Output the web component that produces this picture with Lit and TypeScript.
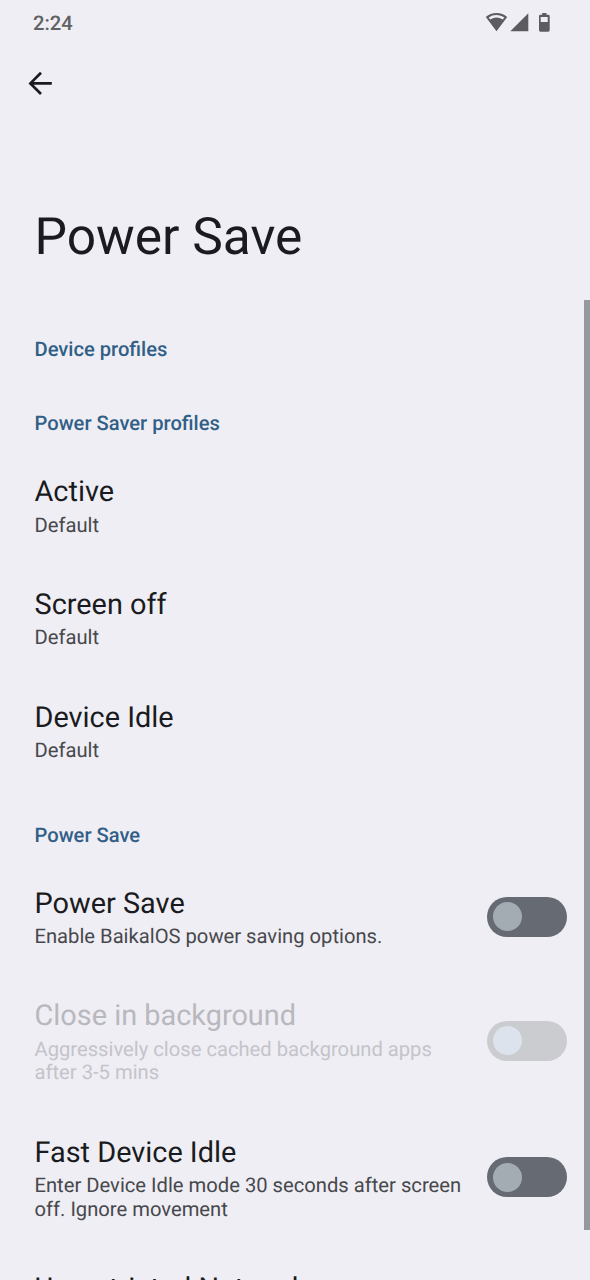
import { LitElement, html, css, nothing } from "lit";
import { customElement, property } from "lit/decorators.js";

@customElement("toggle-switch")
class ToggleSwitch extends LitElement {
  @property({ type: Boolean }) dimmed = false;
  static styles = css`
    :host { display: block; flex: none; }
    .track { box-sizing: border-box; width: 80px; height: 40px; border-radius: 20px; background: #666a72; padding: 5.5px; }
    .thumb { width: 29px; height: 29px; border-radius: 50%; background: #a3abb3; }
    .track.dimmed { background: #cbccd0; }
    .dimmed .thumb { background: #dde3ed; }
  `;
  render() {
    return html`<div class="track ${this.dimmed ? "dimmed" : ""}"><div class="thumb"></div></div>`;
  }
}

@customElement("pref-row")
class PrefRow extends LitElement {
  @property() label = "";
  @property() summary = "";
  @property({ type: Boolean }) toggle = false;
  @property({ type: Boolean }) dimmed = false;
  static styles = css`
    :host { display: block; }
    .row { display: flex; align-items: center; padding: 0 23px 0 34.5px; }
    .text { flex: 1; padding: 26.6px 20px 23.9px 0; }
    .label { font-size: 28.88px; line-height: 34px; color: #1a1b20; white-space: nowrap; }
    .summary { margin-top: 4.4px; margin-bottom: 0.3px; font-size: 20.2px; line-height: 23.5px; color: #47484c; }
    .dimmed .label { color: #b8b8bd; }
    .dimmed .summary { color: #c4c4ca; }
  `;
  render() {
    return html`<div class="row ${this.dimmed ? "dimmed" : ""}">
      <div class="text">
        <div class="label">${this.label}</div>
        ${this.summary ? html`<div class="summary">${this.summary}</div>` : nothing}
      </div>
      ${this.toggle ? html`<toggle-switch .dimmed=${this.dimmed}></toggle-switch>` : nothing}
    </div>`;
  }
}

@customElement("app-root")
class AppRoot extends LitElement {
  static styles = css`
    :host {
      display: block; position: relative; height: 1280px; overflow: hidden;
      background: #efeef4; color: #1a1b20;
      font-family: Roboto, sans-serif; text-rendering: geometricPrecision;
    }
    .status { display: flex; justify-content: space-between; height: 46px; padding: 0 39px 0 33px; }
    .time { font-size: 20.2px; font-weight: 500; line-height: 46px; color: #616165; }
    .icons { display: block; width: 66px; height: 46px; }
    .toolbar { height: 74px; display: flex; align-items: center; padding-left: 28px; }
    .title { margin: 0; padding: 86px 34.5px 0; font-size: 51.5px; line-height: 61px; font-weight: 400; }
    .category { margin: 0; padding-left: 34.5px; font-size: 20.15px; line-height: 24px; font-weight: 500; color: #315f87; }
    .first { padding-top: 70px; }
    .second { padding-top: 50px; padding-bottom: 13.7px; }
    .third { padding-top: 35.8px; padding-bottom: 13.7px; }
    .scrollbar { position: absolute; right: 0; top: 300px; width: 6px; height: 930px; background: #95989c; }
  `;
  render() {
    return html`
      <div class="status">
        <div class="time">2:24</div>
        <svg class="icons" viewBox="485 0 66 46" fill="#5c5c60">
          <path fill-rule="evenodd" d="M496.5 13c-4.1 0-7.800 1.500-10.700 4l10.700 14.300L507.200 17c-2.900-2.500-6.600-4-10.700-4zm0 2.100c2.900 0 5.600.9 7.800 2.400l-1.500 2a11.600 11.600 0 0 0-12.600 0l-1.500-2a13.600 13.600 0 0 1 7.800-2.400z"/>
          <path d="M528.300 13.200v18h-18z"/>
          <path fill-rule="evenodd" d="M542.200 13h4.300v1.800h1.800q1.400 0 1.400 1.400v14.100q0 1.400-1.400 1.400h-7.900q-1.400 0-1.400-1.400V16.200q0-1.400 1.400-1.400h1.800zM540.700 17v5h7v-5z"/>
        </svg>
      </div>
      <div class="toolbar">
        <svg width="25" height="24" viewBox="28 71 25 24" fill="none" stroke="#1a1b20" stroke-width="2.700">
          <path d="M51.800 83.400H31M41 72.800L30.400 83.400L41 94"/>
        </svg>
      </div>
      <h1 class="title">Power Save</h1>
      <h2 class="category first">Device profiles</h2>
      <h2 class="category second">Power Saver profiles</h2>
      <pref-row label="Active" summary="Default"></pref-row>
      <pref-row label="Screen off" summary="Default"></pref-row>
      <pref-row label="Device Idle" summary="Default"></pref-row>
      <h2 class="category third">Power Save</h2>
      <pref-row label="Power Save" summary="Enable BaikalOS power saving options." toggle></pref-row>
      <pref-row label="Close in background" summary="Aggressively close cached background apps after 3-5 mins" toggle dimmed></pref-row>
      <pref-row label="Fast Device Idle" summary="Enter Device Idle mode 30 seconds after screen off. Ignore movement" toggle></pref-row>
      <pref-row label="Unrestricted Network"></pref-row>
      <div class="scrollbar"></div>
    `;
  }
}
